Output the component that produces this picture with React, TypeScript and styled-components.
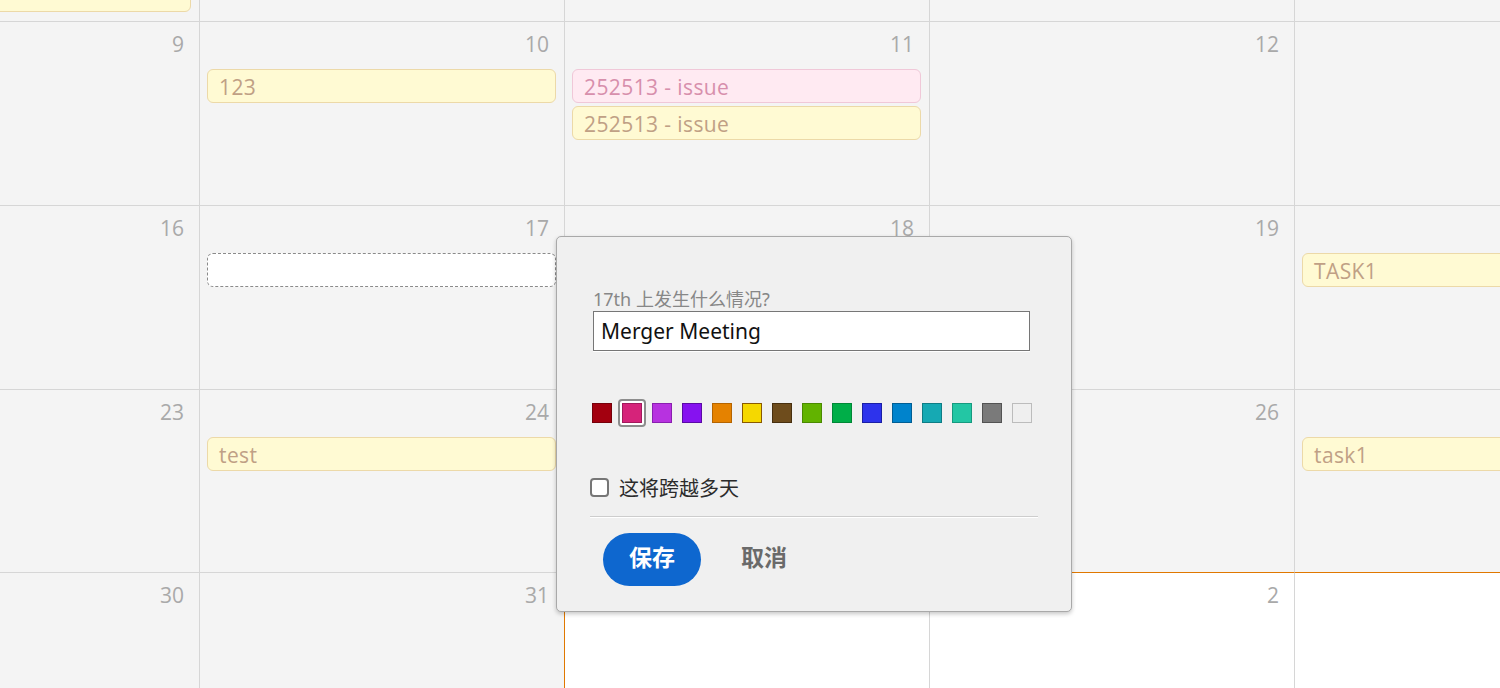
import React from "react";
import styled, { createGlobalStyle, css } from "styled-components";

const GlobalStyle = createGlobalStyle`
  html, body { margin: 0; padding: 0; }
  body {
    width: 1500px;
    height: 688px;
    overflow: hidden;
    background: #f4f4f4;
    font-family: "Open Sans", "Noto Sans CJK SC", sans-serif;
  }
`;

const Viewport = styled.div`
  position: relative;
  width: 1500px;
  height: 688px;
  overflow: hidden;
  background: #f4f4f4;
`;

const MonthGrid = styled.div`
  display: grid;
  grid-template-columns: repeat(5, 365px);
  grid-template-rows: 184px 184px 184px 183px 184px;
  margin-left: -166px;
  margin-top: -163px;
`;

const DayCell = styled.div<{ $next?: boolean; $today?: boolean }>`
  box-sizing: border-box;
  min-width: 0;
  display: flex;
  flex-direction: column;
  padding: 8px 8px 0 7px;
  border-left: 1px solid ${(p) => (p.$today ? "#e07800" : "#d6d6d6")};
  border-top: 1px solid ${(p) => (p.$today || p.$next ? "#e07800" : "#d6d6d6")};
  background: ${(p) => (p.$today || p.$next ? "#ffffff" : "#f4f4f4")};
`;

const DayNumber = styled.div`
  align-self: flex-end;
  height: 28px;
  padding-right: 7px;
  font-size: 21px;
  line-height: 28px;
  color: #a9a9a9;
`;

const EventList = styled.div<{ $offset?: number }>`
  display: flex;
  flex-direction: column;
  gap: 3px;
  margin-top: ${(p) => p.$offset ?? 11}px;
`;

type Tone = "yellow" | "pink" | "draft";

const toneStyles: Record<Tone, ReturnType<typeof css>> = {
  yellow: css`
    background: #fffad3;
    border: 1px solid #ecd9a8;
    color: #c0a085;
  `,
  pink: css`
    background: #ffeaf2;
    border: 1px solid #f0c8d8;
    color: #d78fac;
  `,
  draft: css`
    background: #ffffff;
    border: 1px dashed #8a8a8a;
    color: #333;
  `,
};

const EventChip = styled.div<{ $tone: Tone }>`
  box-sizing: border-box;
  height: 34px;
  border-radius: 6px;
  padding: 2px 10px 0 11px;
  font-size: 21px;
  letter-spacing: 0.4px;
  line-height: 30px;
  white-space: nowrap;
  overflow: hidden;
  ${(p) => toneStyles[p.$tone]}
`;

/* ---------- Popup ---------- */

const Popover = styled.div`
  position: absolute;
  left: 556px;
  top: 236px;
  width: 516px;
  box-sizing: border-box;
  padding: 52px 0 25px 33px;
  background: #f0f0f0;
  border: 1px solid #a9a9a9;
  border-radius: 5px;
  box-shadow: 0 2px 4px rgba(0, 0, 0, 0.22);
  display: flex;
  flex-direction: column;
  font-family: "Noto Sans", "Noto Sans CJK SC", sans-serif;
`;

const PromptLabel = styled.label`
  margin-left: 3px;
  height: 20px;
  font-size: 18px;
  line-height: 20px;
  color: #878787;
  white-space: nowrap;
`;

const TitleInput = styled.input`
  box-sizing: border-box;
  margin: 2px 0 0 3px;
  width: 437px;
  height: 40px;
  padding: 0 7px;
  border: 1px solid #767676;
  border-radius: 0;
  background: #ffffff;
  font-family: "Noto Sans", "Noto Sans CJK SC", sans-serif;
  font-size: 21px;
  color: #111;
  caret-color: #000;
  outline: none;
  box-shadow: 0 1px 0 #ffffff;
`;

const SwatchRow = styled.div`
  display: flex;
  gap: 10px;
  margin: 52px 0 0 2px;
  height: 20px;
`;

const Swatch = styled.button<{ $fill: string; $edge: string; $selected?: boolean }>`
  position: relative;
  box-sizing: border-box;
  width: 20px;
  height: 20px;
  padding: 0;
  border: 1px solid ${(p) => p.$edge};
  background: ${(p) => p.$fill};
  cursor: pointer;
  ${(p) =>
    p.$selected &&
    css`
      box-shadow: 0 0 0 2px #ffffff;
      &::after {
        content: "";
        position: absolute;
        inset: -5px;
        border: 2px solid #8d8d8d;
        border-radius: 4px;
      }
    `}
`;

const CheckRow = styled.label`
  display: flex;
  align-items: center;
  gap: 10px;
  height: 24px;
  margin-top: 52px;
  font-size: 20px;
  color: #2b2b2b;
  cursor: pointer;
`;

const CheckBox = styled.input`
  appearance: none;
  box-sizing: border-box;
  margin: 0;
  width: 19px;
  height: 19px;
  border: 2px solid #767676;
  border-radius: 4px;
  background: #ffffff;
`;

const Divider = styled.div`
  width: 448px;
  margin-top: 17px;
  border-top: 1px solid #cdcdcd;
  border-bottom: 1px solid #ffffff;
`;

const Footer = styled.div`
  display: flex;
  align-items: center;
  margin: 15px 0 0 13px;
`;

const SaveButton = styled.button`
  box-sizing: border-box;
  width: 98px;
  height: 53px;
  padding: 0 0 7px;
  border: none;
  border-radius: 27px;
  background: #0e67cf;
  color: #ffffff;
  font-family: "Noto Sans CJK SC", sans-serif;
  font-size: 23px;
  line-height: 46px;
  font-weight: 700;
  cursor: pointer;
`;

const CancelButton = styled.button`
  box-sizing: border-box;
  height: 53px;
  margin-left: 40px;
  padding: 0 0 7px;
  border: none;
  background: transparent;
  color: #6a6a6a;
  font-family: "Noto Sans CJK SC", sans-serif;
  font-size: 23px;
  line-height: 46px;
  font-weight: 700;
  cursor: pointer;
`;

/* ---------- Data ---------- */

type EventItem = { text: string; tone: Tone };
type Day = { n?: number; events?: EventItem[]; offset?: number; next?: boolean; today?: boolean };

/* Only the days whose numbers fall inside the visible window carry a label. */
const weeks: Day[][] = [
  [
    { events: [{ text: "", tone: "yellow" }], offset: 104 },
    {},
    {},
    {},
    {},
  ],
  [
    { n: 9 },
    { n: 10, events: [{ text: "123", tone: "yellow" }] },
    {
      n: 11,
      events: [
        { text: "252513 - issue", tone: "pink" },
        { text: "252513 - issue", tone: "yellow" },
      ],
    },
    { n: 12 },
    {},
  ],
  [
    { n: 16 },
    { n: 17, events: [{ text: "", tone: "draft" }] },
    { n: 18 },
    { n: 19 },
    { events: [{ text: "TASK1", tone: "yellow" }] },
  ],
  [
    { n: 23 },
    { n: 24, events: [{ text: "test", tone: "yellow" }] },
    { n: 25 },
    { n: 26 },
    { events: [{ text: "task1", tone: "yellow" }] },
  ],
  [
    { n: 30 },
    { n: 31 },
    { n: 1, today: true },
    { n: 2, next: true },
    { next: true },
  ],
];

const swatches: { fill: string; edge: string }[] = [
  { fill: "#a3000f", edge: "#76000a" },
  { fill: "#d6237a", edge: "#a2195c" },
  { fill: "#b732e0", edge: "#8a1fb0" },
  { fill: "#8612f0", edge: "#5b0aa6" },
  { fill: "#e58200", edge: "#b56400" },
  { fill: "#f5d800", edge: "#8a5a00" },
  { fill: "#6e4c1c", edge: "#472f0f" },
  { fill: "#62b300", edge: "#4a8a00" },
  { fill: "#00ae48", edge: "#008836" },
  { fill: "#2d33ec", edge: "#1a1fa6" },
  { fill: "#0083cc", edge: "#005e94" },
  { fill: "#16a9b3", edge: "#0e7d85" },
  { fill: "#23c6a4", edge: "#169a7f" },
  { fill: "#7a7a7a", edge: "#535353" },
  { fill: "#efefef", edge: "#bcbcbc" },
];

export default function App() {
  return (
    <>
      <GlobalStyle />
      <Viewport>
        <MonthGrid>
          {weeks.flat().map((d, i) => (
            <DayCell key={i} $next={d.next} $today={d.today}>
              <DayNumber>{d.n ?? ""}</DayNumber>
              {d.events && (
                <EventList $offset={d.offset}>
                  {d.events.map((e, j) => (
                    <EventChip key={j} $tone={e.tone}>
                      {e.text}
                    </EventChip>
                  ))}
                </EventList>
              )}
            </DayCell>
          ))}
        </MonthGrid>

        <Popover>
          <PromptLabel htmlFor="evt-title">17th 上发生什么情况?</PromptLabel>
          <TitleInput id="evt-title" defaultValue="Merger Meeting" autoFocus />
          <SwatchRow>
            {swatches.map((s, i) => (
              <Swatch key={i} $fill={s.fill} $edge={s.edge} $selected={i === 1} aria-label={`color ${i + 1}`} />
            ))}
          </SwatchRow>
          <CheckRow>
            <CheckBox type="checkbox" />
            这将跨越多天
          </CheckRow>
          <Divider />
          <Footer>
            <SaveButton>保存</SaveButton>
            <CancelButton>取消</CancelButton>
          </Footer>
        </Popover>
      </Viewport>
    </>
  );
}
